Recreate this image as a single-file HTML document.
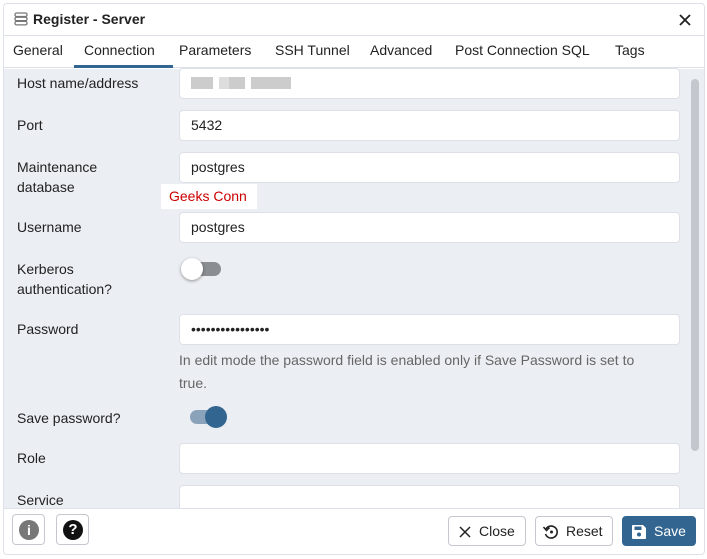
<!DOCTYPE html>
<html><head><style>
*{box-sizing:border-box;margin:0;padding:0}
body{width:707px;height:559px;background:#fff;font-family:"Liberation Sans",Arial,sans-serif;font-size:14px;color:#222;position:relative;overflow:hidden}
.dlg{position:absolute;left:3px;top:3px;width:702px;height:552px;border:1px solid #dde0e6;border-radius:4px;background:#fff;overflow:hidden}
.abs{position:absolute}
.lbl{position:absolute;left:13px;font-size:14px;color:#222;line-height:20px}
.inp{position:absolute;left:175px;width:501px;height:31px;background:#fff;border:1px solid #dde0e6;border-radius:4px;padding:0 11px;line-height:29px;font-size:14px}
.btn{position:absolute;top:512px;height:30px;border:1px solid #c5c8ce;border-radius:4px;background:#fff;font-size:14px;line-height:28px;color:#222}
</style></head><body>
<div class="dlg">
 <div class="abs" style="left:0;top:0;width:702px;height:32px;border-bottom:1px solid #dde0e6">
  <svg class="abs" style="left:10px;top:8px" width="14" height="14" viewBox="0 0 14 14"><g fill="none" stroke="#777" stroke-width="1.3"><rect x="1" y="1" width="12" height="3.5" rx="1.5"/><rect x="1" y="5.2" width="12" height="3.5" rx="1.5"/><rect x="1" y="9.4" width="12" height="3.5" rx="1.5"/></g></svg>
  <div class="abs" style="left:29px;top:7px;font-weight:bold;font-size:14px">Register - Server</div>
  <svg class="abs" style="left:675px;top:10px" width="12" height="12" viewBox="0 0 12 12"><path d="M1 1L11 11M11 1L1 11" stroke="#222" stroke-width="1.8"/></svg>
 </div>
 <div class="abs" style="left:0;top:32px;width:702px;height:32px;border-bottom:1px solid #dde0e6;font-size:14px;color:#222">
  <span class="abs" style="left:9px;top:6px">General</span>
  <span class="abs" style="left:80px;top:6px">Connection</span>
  <span class="abs" style="left:175px;top:6px">Parameters</span>
  <span class="abs" style="left:271px;top:6px">SSH Tunnel</span>
  <span class="abs" style="left:366px;top:6px">Advanced</span>
  <span class="abs" style="left:451px;top:6px">Post Connection SQL</span>
  <span class="abs" style="left:611px;top:6px">Tags</span>
  <div class="abs" style="left:70px;top:29px;width:99px;height:3px;background:#326690"></div>
 </div>
 <div class="abs" style="left:0;top:65px;width:702px;height:439px;background:#ebeef3">
  <div class="abs" style="left:687px;top:10px;width:8px;height:372px;background:#c4c8ce;border-radius:4px"></div>
 </div>
 <div class="lbl" style="top:69px">Host name/address</div>
 <div class="inp" style="top:64px"><span style="display:inline-block;width:100px;height:12px;margin-top:8px;background:linear-gradient(90deg,#ccc 0 22px,#fff 22px 28px,#ddd 28px 38px,#ccc 38px 54px,#fff 54px 60px,#ccc 60px 100px)"></span></div>
 <div class="lbl" style="top:111px">Port</div>
 <div class="inp" style="top:106px">5432</div>
 <div class="lbl" style="top:153px">Maintenance<br>database</div>
 <div class="inp" style="top:148px">postgres</div>
 <div class="abs" style="left:157px;top:180px;width:96px;height:25px;background:#fff;color:#c00;font-size:14px;line-height:25px;padding-left:8px">Geeks Conn</div>
 <div class="lbl" style="top:213px">Username</div>
 <div class="inp" style="top:208px">postgres</div>
 <div class="lbl" style="top:255px">Kerberos<br>authentication?</div>
 <div class="abs" style="left:180px;top:258px;width:37px;height:14px;border-radius:7px;background:#8a8d92"></div>
 <div class="abs" style="left:177px;top:254px;width:22px;height:22px;border-radius:50%;background:#fff;box-shadow:0 1px 3px rgba(0,0,0,.4)"></div>
 <div class="lbl" style="top:315px">Password</div>
 <div class="inp" style="top:310px;letter-spacing:0">••••••••••••••••</div>
 <div class="abs" style="left:175px;top:345px;font-size:14px;color:#666;line-height:23px;width:470px">In edit mode the password field is enabled only if Save Password is set to true.</div>
 <div class="lbl" style="top:404px">Save password?</div>
 <div class="abs" style="left:186px;top:406px;width:37px;height:14px;border-radius:7px;background:#8aa3bb"></div>
 <div class="abs" style="left:201px;top:402px;width:22px;height:22px;border-radius:50%;background:#326690"></div>
 <div class="lbl" style="top:444px">Role</div>
 <div class="inp" style="top:439px"></div>
 <div class="lbl" style="top:486px">Service</div>
 <div class="inp" style="top:481px"></div>
 <div class="abs" style="left:0;top:504px;width:702px;height:48px;background:#fff;border-top:1px solid #dde0e6"></div>
 <div class="btn" style="left:8px;width:33px;height:31px;top:510px"><div class="abs" style="left:6px;top:5px;width:20px;height:20px;border-radius:50%;background:#777;color:#fff;font-weight:bold;text-align:center;line-height:20px;font-size:14px">i</div></div>
 <div class="btn" style="left:52px;width:33px;height:31px;top:510px"><div class="abs" style="left:6px;top:5px;width:20px;height:20px;border-radius:50%;background:#111;color:#fff;font-weight:bold;text-align:center;line-height:20px;font-size:15px">?</div></div>
 <div class="btn" style="left:444px;width:78px"><svg class="abs" style="left:10px;top:9px" width="12" height="12" viewBox="0 0 12 12"><path d="M1 1L11 11M11 1L1 11" stroke="#222" stroke-width="1.5"/></svg><span class="abs" style="left:30px">Close</span></div>
 <div class="btn" style="left:531px;width:78px"><svg class="abs" style="left:6px;top:6px" width="18" height="18" viewBox="0 0 18 18"><path d="M4 6A6 6 0 1 1 3.5 11" fill="none" stroke="#222" stroke-width="1.6"/><path d="M1.5 4L4.5 7.5L7.5 4.5" fill="none" stroke="#222" stroke-width="1.6"/><circle cx="9.5" cy="9" r="1.5" fill="#222"/></svg><span class="abs" style="left:30px">Reset</span></div>
 <div class="btn" style="left:618px;width:74px;background:#326690;border-color:#326690;color:#fff"><svg class="abs" style="left:8px;top:7px" width="16" height="16" viewBox="0 0 16 16"><path d="M1 2a1 1 0 0 1 1-1h10l3 3v10a1 1 0 0 1-1 1H2a1 1 0 0 1-1-1z" fill="#fff"/><rect x="3.5" y="2.5" width="7" height="3.5" fill="#326690"/><circle cx="8" cy="10.5" r="2" fill="#326690"/></svg><span class="abs" style="left:31px">Save</span></div>
</div>
</body></html>
